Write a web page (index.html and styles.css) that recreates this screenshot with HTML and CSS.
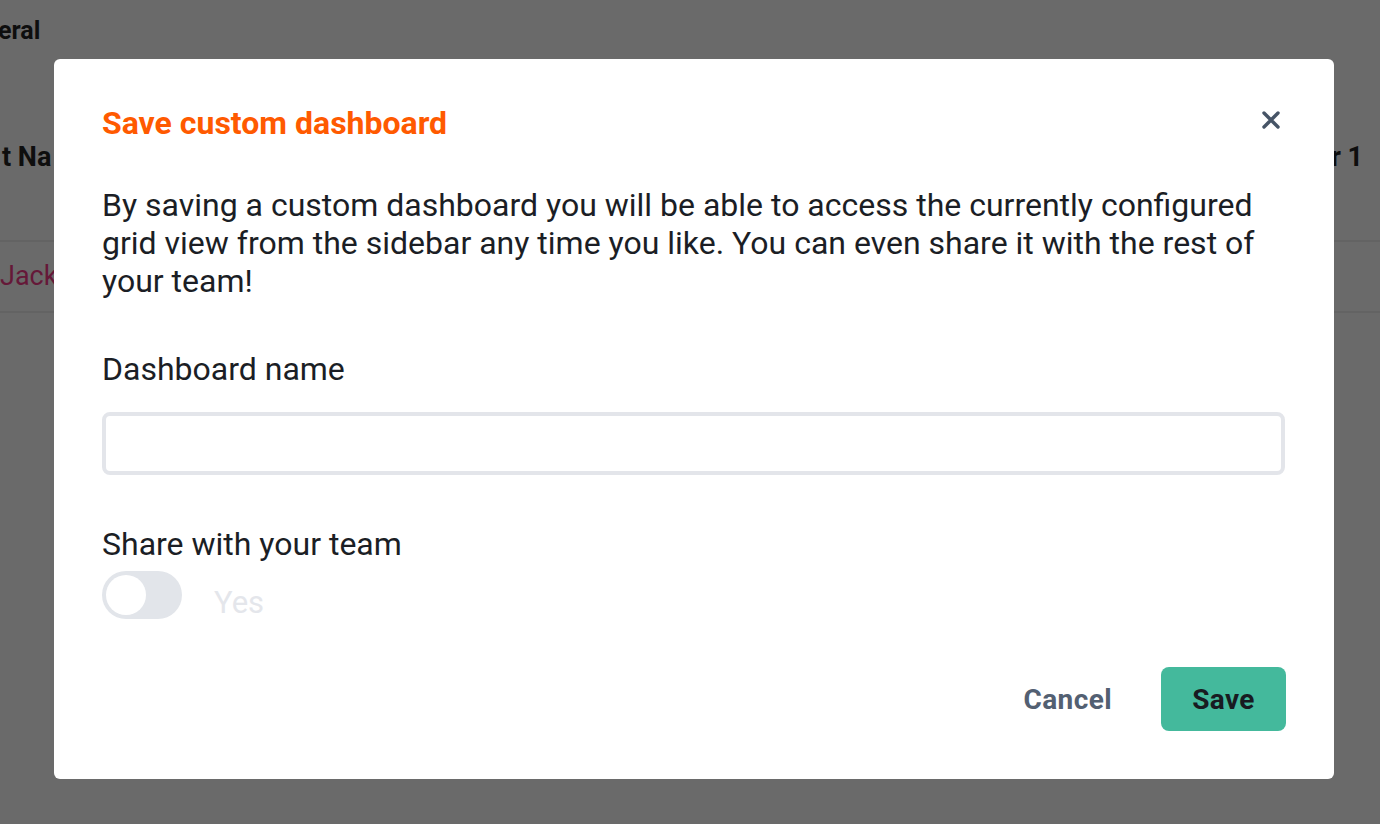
FILE: index.html
```html
<!DOCTYPE html>
<html>
<head>
<meta charset="utf-8">
<link rel="stylesheet" href="styles.css">
</head>
<body>
<div class="page">
  <div class="page-title">eral</div>
  <div class="table-head">
    <span>t Na</span>
    <span>r 1</span>
  </div>
  <div class="table-row"><span class="link">Jack</span></div>
</div>
<div class="overlay">
  <div class="modal">
    <div class="modal-head">
      <h2 class="modal-title">Save custom dashboard</h2>
      <button class="close" aria-label="Close">
        <svg width="18" height="18" viewBox="0 0 18 18"><path d="M2 2 L16 16 M16 2 L2 16" stroke="#465466" stroke-width="3.4" stroke-linecap="round"/></svg>
      </button>
    </div>
    <p class="desc">By saving a custom dashboard you will be able to access the currently configured grid view from the sidebar any time you like. You can even share it with the rest of your team!</p>
    <label class="label">Dashboard name</label>
    <input class="input" type="text">
    <div class="label share">Share with your team</div>
    <div class="toggle-row">
      <span class="toggle"><span class="knob"></span></span>
      <span class="yes">Yes</span>
    </div>
    <div class="actions">
      <button class="btn-cancel">Cancel</button>
      <button class="btn-save">Save</button>
    </div>
  </div>
</div>
</body>
</html>
```
FILE: styles.css
```css
html, body {
  margin: 0;
  padding: 0;
  width: 1380px;
  height: 824px;
  overflow: hidden;
  background: #6a6a6a;
  font-family: Roboto, "Liberation Sans", sans-serif;
}
.page {
  color: #0e0e0e;
}
.page-title {
  font-weight: 700;
  font-size: 25px;
  line-height: 30px;
  padding-top: 16px;
  text-indent: -2px;
}
.table-head {
  display: flex;
  justify-content: space-between;
  font-weight: 700;
  font-size: 27px;
  line-height: 30px;
  margin-top: 96px;
  padding-left: 2px;
  padding-right: 17px;
  height: 98px;
  border-bottom: 2px solid #636363;
}
.table-row {
  height: 69px;
  border-bottom: 2px solid #636363;
  font-size: 27px;
  line-height: 69px;
}
.link { color: #651838; }
.overlay {
  position: fixed;
  inset: 0;
}
.modal {
  box-sizing: border-box;
  margin: 59px 0 0 54px;
  width: 1280px;
  height: 720px;
  background: #fff;
  border-radius: 6px;
  padding: 44px 48px 48px 48px;
  display: flex;
  flex-direction: column;
  color: #1b1e25;
}
.modal-head {
  display: flex;
  justify-content: space-between;
  align-items: center;
}
.modal-title {
  margin: 0;
  color: #ff5a00;
  font-size: 32px;
  line-height: 40px;
  font-weight: 700;
}
.close {
  border: 0;
  background: none;
  padding: 0;
  margin-right: 6px;
  margin-top: -6px;
  width: 18px;
  height: 18px;
  display: flex;
}
.desc {
  margin: 43px 0 0 0;
  font-size: 32px;
  line-height: 38px;
}
.label {
  font-size: 32px;
  line-height: 38px;
  margin-top: 50px;
  display: block;
}
.input {
  box-sizing: border-box;
  margin-top: 24px;
  width: 1183px;
  height: 63px;
  border: 4px solid #e3e5ea;
  border-radius: 8px;
  outline: none;
  background: #fff;
}
.share { margin-top: 50px; }
.toggle-row {
  display: flex;
  align-items: flex-start;
  margin-top: 8px;
}
.toggle {
  width: 80px;
  height: 48px;
  border-radius: 24px;
  background: #e2e5ea;
  display: flex;
  align-items: center;
  padding-left: 4px;
  box-sizing: border-box;
}
.knob {
  width: 40px;
  height: 40px;
  border-radius: 50%;
  background: #fff;
}
.yes {
  margin-left: 32px;
  margin-top: 14px;
  font-size: 31px;
  line-height: 36px;
  color: #e4e6eb;
}
.actions {
  margin-top: auto;
  display: flex;
  justify-content: flex-end;
  align-items: center;
}
.btn-cancel {
  border: 0;
  background: none;
  font-family: Roboto, "Liberation Sans", sans-serif;
  font-weight: 700;
  font-size: 28px;
  letter-spacing: 0.4px;
  color: #536072;
  padding: 0;
  margin-right: 49px;
}
.btn-save {
  border: 0;
  width: 125px;
  height: 64px;
  border-radius: 8px;
  background: #44b99c;
  font-family: Roboto, "Liberation Sans", sans-serif;
  font-weight: 700;
  font-size: 28px;
  letter-spacing: 0.4px;
  color: #181b21;
}
```
